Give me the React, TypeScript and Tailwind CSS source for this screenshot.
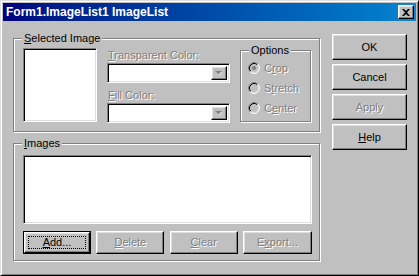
const raised =
  'border border-t-white border-l-white border-b-black border-r-black shadow-[inset_-1px_-1px_0_#808080,inset_1px_1px_0_#dfdfdf] bg-[#c0c0c0]'
const sunken =
  'border border-t-[#808080] border-l-[#808080] border-b-white border-r-white shadow-[inset_1px_1px_0_#000,inset_-1px_-1px_0_#dfdfdf]'
const dim = 'text-[#808080] [text-shadow:1px_1px_0_#fff]'

function Group({ label, className, children }: { label: React.ReactNode; className: string; children?: React.ReactNode }) {
  return (
    <div className={`relative border border-[#808080] shadow-[inset_1px_1px_0_#fff,1px_1px_0_#fff] ${className}`}>
      <span className="absolute left-[8px] top-[-8px] px-[2px] bg-[#c0c0c0] leading-[14px]">{label}</span>
      {children}
    </div>
  )
}

function Combo() {
  return (
    <div className={`${sunken} bg-white h-[20px] w-[123px] flex justify-end p-[2px]`}>
      <div className={`${raised} w-[16px] h-[14px] flex items-center justify-center`}>
        <svg width="8" height="5" viewBox="0 0 8 5">
          <path d="M1 1h6L4 4z" fill="#fff" />
          <path d="M0 0h7L3.5 3.5z" fill="#808080" />
        </svg>
      </div>
    </div>
  )
}

function Radio({ checked }: { checked?: boolean }) {
  return (
    <svg width="12" height="12" viewBox="0 0 12 12">
      <circle cx="6" cy="6" r="5" fill="#c0c0c0" />
      <path d="M2.11 9.89 A5.5 5.5 0 0 1 9.89 2.11" stroke="#808080" fill="none" />
      <path d="M9.89 2.11 A5.5 5.5 0 0 1 2.11 9.89" stroke="#fff" fill="none" />
      <path d="M2.82 9.18 A4.5 4.5 0 0 1 9.18 2.82" stroke="#000" fill="none" />
      <path d="M9.18 2.82 A4.5 4.5 0 0 1 2.82 9.18" stroke="#dfdfdf" fill="none" />
      {checked && <circle cx="6" cy="6" r="2" fill="#808080" />}
    </svg>
  )
}

function Btn({ children, disabled, focused, className = '' }: { children: React.ReactNode; disabled?: boolean; focused?: boolean; className?: string }) {
  const inner = (
    <div className={`${raised} relative h-full w-full flex items-center justify-center ${disabled ? dim : 'text-black'}`}>
      {focused && <span className="absolute inset-[3px] border border-dotted border-black" />}
      <span className="relative">{children}</span>
    </div>
  )
  if (focused) return <div className={`border border-black ${className}`}>{inner}</div>
  return <div className={className}>{inner}</div>
}

export default function App() {
  return (
    <div className="w-[419px] h-[276px] bg-[#c0c0c0] font-['Liberation_Sans',Arial,sans-serif] text-[11px] text-black border border-t-[#dfdfdf] border-l-[#dfdfdf] border-b-black border-r-black shadow-[inset_1px_1px_0_#fff,inset_-1px_-1px_0_#808080] p-[2px] flex flex-col">
      <div className="h-[18px] shrink-0 flex items-center justify-between pl-[3px] pr-[2px] bg-gradient-to-r from-[#000080] to-[#1084d0]">
        <span className="text-white font-bold text-[12px] leading-none">Form1.ImageList1 ImageList</span>
        <div className={`${raised} w-[16px] h-[14px] flex items-center justify-center`}>
          <svg width="8" height="7" viewBox="0 0 8 7">
            <path d="M0 0h2l2 2 2-2h2L5 3.5 8 7H6L4 5 2 7H0l3-3.5z" fill="#000" />
          </svg>
        </div>
      </div>

      <div className="flex flex-1">
        <div className="ml-[10px] mt-[17px] w-[307px] flex flex-col gap-[11px]">
          <Group label={<><u>S</u>elected Image</>} className="h-[94px] flex pl-[9px] pt-[9px]">
            <div className={`${sunken} bg-white w-[74px] h-[74px]`} />
            <div className="ml-[10px] w-[123px] flex flex-col">
              <div className={`h-[15px] leading-[14px] pl-[1px] ${dim}`}>
                <u>T</u>ransparent Color:
              </div>
              <Combo />
              <div className={`h-[20px] pt-[5px] leading-[14px] pl-[1px] ${dim}`}>
                <u>F</u>ill Color:
              </div>
              <Combo />
            </div>
            <Group label="Options" className="ml-[10px] mt-[2px] w-[71px] h-[72px] pt-[7px] pl-[7px] flex flex-col">
              {[
                ['C', 'r', 'op', true],
                ['S', 't', 'retch', false],
                ['C', 'e', 'nter', false],
              ].map(([a, b, c, chk]) => (
                <div key={String(a) + b} className="h-[20px] flex items-center gap-[4px]">
                  <Radio checked={chk as boolean} />
                  <span className={dim}>
                    {a}
                    <u>{b}</u>
                    {c}
                  </span>
                </div>
              ))}
            </Group>
          </Group>

          <Group label={<><u>I</u>mages</>} className="h-[118px] pl-[9px] pt-[11px] flex flex-col">
            <div className={`${sunken} bg-white w-[289px] h-[69px]`} />
            <div className="mt-[7px] w-[289px] flex justify-between">
              <Btn focused className="w-[68px] h-[23px]">
                <u>A</u>dd...
              </Btn>
              <Btn disabled className="w-[68px] h-[23px]">
                <u>D</u>elete
              </Btn>
              <Btn disabled className="w-[68px] h-[23px]">
                <u>C</u>lear
              </Btn>
              <Btn disabled className="w-[69px] h-[23px]">
                E<u>x</u>port...
              </Btn>
            </div>
          </Group>
        </div>

        <div className="ml-[12px] mt-[13px] w-[75px] flex flex-col gap-[4px]">
          <Btn className="h-[26px]">OK</Btn>
          <Btn className="h-[26px]">Cancel</Btn>
          <Btn disabled className="h-[26px]">
            Apply
          </Btn>
          <Btn className="h-[26px]">
            <u>H</u>elp
          </Btn>
        </div>
      </div>
    </div>
  )
}
